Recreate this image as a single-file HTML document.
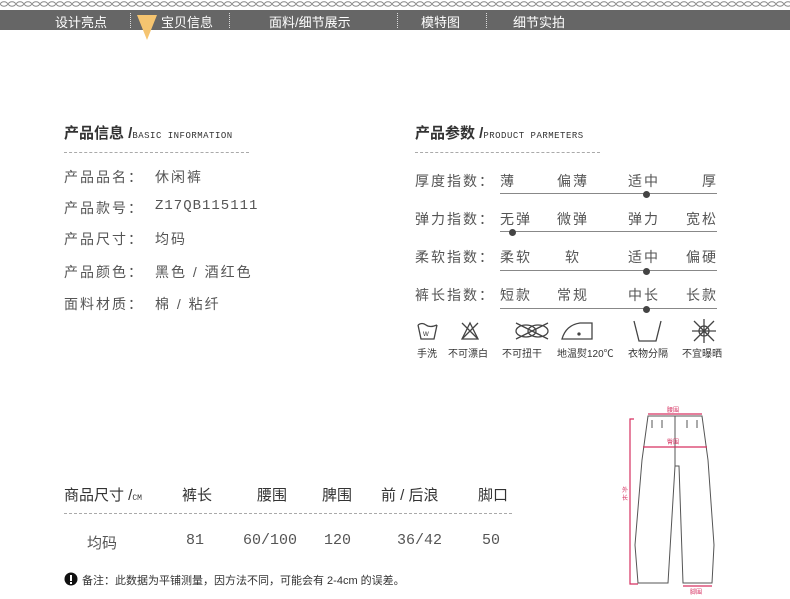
<!DOCTYPE html>
<html><head><meta charset="utf-8"><style>
body{margin:0;width:790px;height:599px;background:#fff;position:relative;overflow:hidden;font-family:"Liberation Sans","Noto Sans CJK SC",sans-serif;color:#555}
.a{position:absolute;white-space:nowrap}
.nav{position:absolute;left:0;top:10px;width:790px;height:20px;background:#666}
.nav span{position:absolute;top:2px;color:#fff;font-size:13px}
.sep{position:absolute;top:3px;height:15px;border-left:1px dotted #ddd}
.t{font-size:15px;font-weight:bold;color:#333}
.t small{font-size:9px;font-weight:normal;font-family:"Liberation Mono",monospace;letter-spacing:0.5px;color:#333}
.h{font-size:15px;color:#333}
.dl{position:absolute;border-top:1px dashed #aaa;height:0}
.r{font-size:14px;color:#555;letter-spacing:2px}
.ln{position:absolute;height:1px;background:#888}
.dot{position:absolute;width:7px;height:7px;border-radius:50%;background:#444}
.ic{font-size:10px;color:#333}
</style></head><body>
<svg class="a" style="left:0;top:0" width="790" height="10"><defs><pattern id="c" width="8" height="8" patternUnits="userSpaceOnUse"><ellipse cx="4" cy="4" rx="3.5" ry="2.2" fill="none" stroke="#888" stroke-width="1"/></pattern></defs><rect width="790" height="9" fill="url(#c)"/></svg>
<div class="nav">
<span style="left:55px">设计亮点</span><div class="sep" style="left:130px"></div>
<span style="left:161px">宝贝信息</span><div class="sep" style="left:229px"></div>
<span style="left:269px">面料/细节展示</span><div class="sep" style="left:397px"></div>
<span style="left:421px">模特图</span><div class="sep" style="left:486px"></div>
<span style="left:513px">细节实拍</span>
</div>
<svg class="a" style="left:136px;top:15px" width="22" height="26"><polygon points="1,0 21,0 11,25" fill="#f5c470"/></svg>

<div class="a t" style="left:64px;top:122px">产品信息 /<small>BASIC INFORMATION</small></div>
<div class="dl" style="left:64px;top:152px;width:185px"></div>
<div class="a r" style="left:64px;top:167px">产品品名：</div><div class="a r" style="left:155px;top:167px">休闲裤</div>
<div class="a r" style="left:64px;top:198px">产品款号：</div><div class="a r" style="left:155px;top:198px;font-family:'Liberation Mono',monospace;letter-spacing:1px">Z17QB115111</div>
<div class="a r" style="left:64px;top:229px">产品尺寸：</div><div class="a r" style="left:155px;top:229px">均码</div>
<div class="a r" style="left:64px;top:262px">产品颜色：</div><div class="a r" style="left:155px;top:262px">黑色 / 酒红色</div>
<div class="a r" style="left:64px;top:294px">面料材质：</div><div class="a r" style="left:155px;top:294px">棉 / 粘纤</div>

<div class="a t" style="left:415px;top:122px">产品参数 /<small>PRODUCT PARMETERS</small></div>
<div class="dl" style="left:415px;top:152px;width:185px"></div>

<div class="a r" style="left:415px;top:171px">厚度指数：</div>
<div class="a r" style="left:500px;top:171px">薄</div><div class="a r" style="left:557px;top:171px">偏薄</div><div class="a r" style="left:628px;top:171px">适中</div><div class="a r" style="left:702px;top:171px">厚</div>
<div class="ln" style="left:500px;top:193px;width:217px"></div><div class="dot" style="left:643px;top:191px"></div>

<div class="a r" style="left:415px;top:209px">弹力指数：</div>
<div class="a r" style="left:500px;top:209px">无弹</div><div class="a r" style="left:557px;top:209px">微弹</div><div class="a r" style="left:628px;top:209px">弹力</div><div class="a r" style="left:686px;top:209px">宽松</div>
<div class="ln" style="left:500px;top:231px;width:217px"></div><div class="dot" style="left:509px;top:229px"></div>

<div class="a r" style="left:415px;top:247px">柔软指数：</div>
<div class="a r" style="left:500px;top:247px">柔软</div><div class="a r" style="left:565px;top:247px">软</div><div class="a r" style="left:628px;top:247px">适中</div><div class="a r" style="left:686px;top:247px">偏硬</div>
<div class="ln" style="left:500px;top:270px;width:217px"></div><div class="dot" style="left:643px;top:268px"></div>

<div class="a r" style="left:415px;top:285px">裤长指数：</div>
<div class="a r" style="left:500px;top:285px">短款</div><div class="a r" style="left:557px;top:285px">常规</div><div class="a r" style="left:628px;top:285px">中长</div><div class="a r" style="left:686px;top:285px">长款</div>
<div class="ln" style="left:500px;top:308px;width:217px"></div><div class="dot" style="left:643px;top:306px"></div>

<svg class="a" style="left:410px;top:315px" width="320" height="30" fill="none" stroke="#444" stroke-width="1.3">
<path d="M8 10 L11 24 H24 L27 10"/><path d="M8 10 Q12 7 16 10 Q20 13 27 10"/><text x="13" y="21" font-size="8" fill="#444" stroke="none">w</text>
<path d="M52 24 L60 8 L68 24 Z"/><path d="M52 8 L68 24 M68 8 L52 24"/>
<ellipse cx="116" cy="16" rx="10" ry="6"/><ellipse cx="128" cy="16" rx="10" ry="6"/><path d="M106 8 L138 24 M106 24 L138 8"/>
<path d="M152 24 H182 V8 H170 Q156 10 152 24 Z"/><circle cx="169" cy="19" r="1" fill="#444"/>
<path d="M224 6 L229 26 H246 L251 6"/>
<circle cx="294" cy="16" r="5"/><path d="M284 6 L304 26 M304 6 L284 26 M294 4 V28 M282 16 H306"/>
</svg>
<div class="a ic" style="left:417px;top:345px">手洗</div>
<div class="a ic" style="left:448px;top:345px">不可漂白</div>
<div class="a ic" style="left:502px;top:345px">不可扭干</div>
<div class="a ic" style="left:557px;top:345px">地温熨120℃</div>
<div class="a ic" style="left:628px;top:345px">衣物分隔</div>
<div class="a ic" style="left:682px;top:345px">不宜曝晒</div>

<svg class="a" style="left:605px;top:400px" width="130" height="199" fill="none">
<g stroke="#555" stroke-width="1">
<path d="M43 16 L37 60 L30 145 L33 183 L63 183 L70 66 L74 66 L78 183 L107 183 L109 145 L103 60 L97 16 Z"/>
<path d="M70 16 V66"/><path d="M47 20 v8 M57 20 v8 M82 20 v8 M92 20 v8"/>
</g>
<g stroke="#d63060" stroke-width="1.2">
<path d="M43 14 H97"/><path d="M38 47 H102"/><path d="M29 19 H25 V184 H33"/><path d="M78 186 H107"/>
</g>
<g fill="#d63060" font-size="6" font-family="Noto Sans CJK SC"><text x="62" y="12">腰围</text><text x="62" y="44">臀围</text><text x="17" y="92">外</text><text x="17" y="100">长</text><text x="85" y="194">脚围</text></g>
</svg>

<div class="a h" style="left:64px;top:484px">商品尺寸 /<small style="font-size:8px;font-family:'Liberation Mono',monospace">CM</small></div>
<div class="a h" style="left:182px;top:484px">裤长</div>
<div class="a h" style="left:257px;top:484px">腰围</div>
<div class="a h" style="left:322px;top:484px">脾围</div>
<div class="a h" style="left:381px;top:484px">前 / 后浪</div>
<div class="a h" style="left:478px;top:484px">脚口</div>
<div class="dl" style="left:64px;top:513px;width:448px"></div>
<div class="a" style="left:87px;top:532px;font-size:15px">均码</div>
<div class="a" style="left:186px;top:532px;font-size:15px;font-family:'Liberation Mono',monospace">81</div>
<div class="a" style="left:243px;top:532px;font-size:15px;font-family:'Liberation Mono',monospace">60/100</div>
<div class="a" style="left:324px;top:532px;font-size:15px;font-family:'Liberation Mono',monospace">120</div>
<div class="a" style="left:397px;top:532px;font-size:15px;font-family:'Liberation Mono',monospace">36/42</div>
<div class="a" style="left:482px;top:532px;font-size:15px;font-family:'Liberation Mono',monospace">50</div>
<svg class="a" style="left:64px;top:572px" width="14" height="14"><circle cx="7" cy="7" r="6.5" fill="#111"/><rect x="6" y="3" width="2" height="6" fill="#fff"/><rect x="6" y="10" width="2" height="2" fill="#fff"/></svg>
<div class="a" style="left:82px;top:572px;font-size:11px;color:#333">备注：此数据为平铺测量，因方法不同，可能会有 2-4cm 的误差。</div>
</body></html>
